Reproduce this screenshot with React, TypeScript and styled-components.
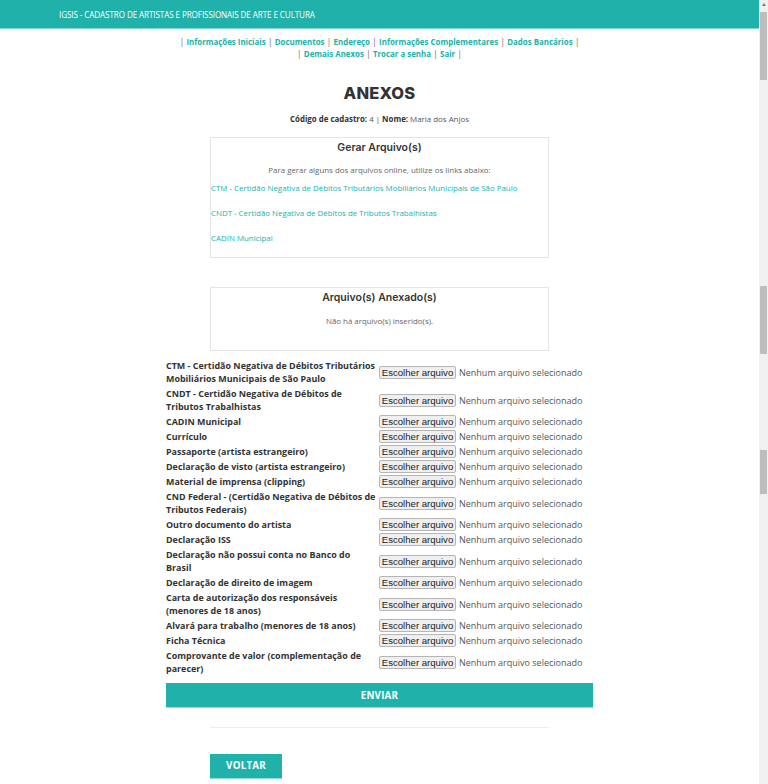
import React from "react";
import styled, { createGlobalStyle } from "styled-components";

const Global = createGlobalStyle`
  html, body { margin: 0; padding: 0; background: #fff; overflow: hidden; }
  body { font-family: "Open Sans", "DejaVu Sans", sans-serif; color: #333; }
  * { box-sizing: border-box; }
`;

const TEAL = "#20b2aa";

const Shell = styled.div`
  display: flex;
  width: 768px;
  height: 784px;
  overflow: hidden;
`;

const Main = styled.div`
  flex: 1;
  min-width: 0;
  display: flex;
  flex-direction: column;
  align-items: stretch;
`;

const Header = styled.header`
  flex: none;
  height: 29px;
  background: ${TEAL};
  border-bottom: 1px solid #7fd6d1;
  display: flex;
  align-items: center;
  padding: 1px 0 0 59px;
  color: #fff;
  font-size: 8.1px;
  letter-spacing: -0.1px;
`;

const Column = styled.div`
  flex: none;
  width: 427px;
  margin: 0 auto;
  display: flex;
  flex-direction: column;
  align-items: center;
`;

const Nav = styled.nav`
  margin-top: 7px;
  width: 427px;
  text-align: center;
  font-size: 7.9px;
  line-height: 12px;
  color: #777;
`;

const Sep = styled.span`
  font-size: 9px;
  color: #777;
`;

const NavLink = styled.a`
  color: ${TEAL};
  font-weight: 700;
  text-decoration: none;
`;

const Title = styled.h1`
  margin: 23px 0 0;
  font-family: Inter, "Liberation Sans", sans-serif;
  font-weight: 800;
  font-size: 16.5px;
  line-height: 20px;
  color: #333;
  letter-spacing: 0.2px;
`;

const Info = styled.p`
  margin: 10px 0 0;
  font-size: 7.9px;
  line-height: 12px;
  color: #555;
  b { color: #333; font-weight: 700; }
`;

const Box = styled.section<{ $mt: number; $h: number }>`
  flex: none;
  margin-top: ${(p) => p.$mt}px;
  width: 339px;
  height: ${(p) => p.$h}px;
  border: 1px solid #e4e4e4;
  display: flex;
  flex-direction: column;
  align-items: stretch;
`;

const BoxTitle = styled.h2`
  margin: 3px 0 0;
  text-align: center;
  font-family: Inter, "Liberation Sans", sans-serif;
  font-weight: 600;
  font-size: 10.5px;
  line-height: 14px;
  color: #333;
`;

const BoxText = styled.p<{ $mt: number }>`
  margin: ${(p) => p.$mt}px 0 0;
  text-align: center;
  font-size: 7.9px;
  line-height: 12px;
  color: #666;
`;

const BoxLink = styled.a<{ $mt: number }>`
  display: block;
  margin-top: ${(p) => p.$mt}px;
  font-size: 7.9px;
  line-height: 12px;
  color: ${TEAL};
  text-decoration: none;
`;

const Form = styled.form`
  margin-top: 8px;
  width: 427px;
  display: flex;
  flex-direction: column;
  gap: 2px;
`;

const Row = styled.div`
  display: flex;
  align-items: center;
`;

const Label = styled.label`
  width: 210.5px;
  margin-right: 2.5px;
  flex: none;
  font-size: 8.95px;
  font-weight: 700;
  line-height: 13px;
  color: #333;
`;

const FileButton = styled.span`
  display: inline-flex;
  align-items: center;
  justify-content: center;
  height: 13px;
  width: 77px;
  border: 1px solid #b5b5b5;
  border-radius: 2px;
  background: #efefef;
  font-family: "Liberation Sans", Arial, sans-serif;
  font-size: 9.6px;
  color: #222;
  flex: none;
`;

const FileStatus = styled.span`
  margin-left: 3px;
  font-size: 9px;
  color: #555;
  white-space: nowrap;
`;

const SendButton = styled.button`
  flex: none;
  margin-top: 8px;
  width: 427px;
  height: 25px;
  border: none;
  border-bottom: 1px solid #8fdcd7;
  background: ${TEAL};
  color: #fff;
  font-family: "Open Sans", sans-serif;
  font-weight: 700;
  font-size: 9.8px;
  letter-spacing: 0.2px;
`;

const Divider = styled.hr`
  flex: none;
  margin: 19px 0 0;
  width: 339px;
  border: none;
  border-top: 1px solid #eee;
`;

const BackRow = styled.div`
  flex: none;
  width: 339px;
  margin-top: 24px;
`;

const BackButton = styled.button`
  width: 72px;
  height: 25px;
  border: none;
  border-bottom: 1px solid #8fdcd7;
  background: ${TEAL};
  color: #fff;
  font-family: "Open Sans", sans-serif;
  font-weight: 700;
  font-size: 9.8px;
  letter-spacing: 0.2px;
`;

const ScrollTrack = styled.div`
  width: 9px;
  flex: none;
  height: 784px;
  background: #f0f0f0;
  display: flex;
  flex-direction: column;
  align-items: center;
`;

const ScrollArrow = styled.div`
  margin-top: 3px;
  width: 0;
  height: 0;
  border-left: 2.5px solid transparent;
  border-right: 2.5px solid transparent;
  border-bottom: 3px solid #7a7a7a;
`;

const Thumb = styled.div<{ $mt: number; $h: number }>`
  flex: none;
  margin-top: ${(p) => p.$mt}px;
  width: 7px;
  height: ${(p) => p.$h}px;
  background: #bdbdbd;
`;

const navItems = [
  "Informações Iniciais",
  "Documentos",
  "Endereço",
  "Informações Complementares",
  "Dados Bancários",
];
const navItems2 = ["Demais Anexos", "Trocar a senha", "Sair"];

const files = [
  "CTM - Certidão Negativa de Débitos Tributários Mobiliários Municipais de São Paulo",
  "CNDT - Certidão Negativa de Débitos de Tributos Trabalhistas",
  "CADIN Municipal",
  "Currículo",
  "Passaporte (artista estrangeiro)",
  "Declaração de visto (artista estrangeiro)",
  "Material de imprensa (clipping)",
  "CND Federal - (Certidão Negativa de Débitos de Tributos Federais)",
  "Outro documento do artista",
  "Declaração ISS",
  "Declaração não possui conta no Banco do Brasil",
  "Declaração de direito de imagem",
  "Carta de autorização dos responsáveis (menores de 18 anos)",
  "Alvará para trabalho (menores de 18 anos)",
  "Ficha Técnica",
  "Comprovante de valor (complementação de parecer)",
];

function NavLine({ items }: { items: string[] }) {
  return (
    <div>
      <Sep>|</Sep>{" "}
      {items.map((it) => (
        <React.Fragment key={it}>
          <NavLink href="#">{it}</NavLink> <Sep>|</Sep>{" "}
        </React.Fragment>
      ))}
    </div>
  );
}

export default function App() {
  return (
    <>
      <Global />
      <Shell>
        <Main>
          <Header>IGSIS - CADASTRO DE ARTISTAS E PROFISSIONAIS DE ARTE E CULTURA</Header>
          <Column>
            <Nav>
              <NavLine items={navItems} />
              <NavLine items={navItems2} />
            </Nav>
            <Title>ANEXOS</Title>
            <Info>
              <b>Código de cadastro:</b> 4 | <b>Nome:</b> Maria dos Anjos
            </Info>
            <Box $mt={12} $h={121}>
              <BoxTitle>Gerar Arquivo(s)</BoxTitle>
              <BoxText $mt={9}>Para gerar alguns dos arquivos online, utilize os links abaixo:</BoxText>
              <BoxLink $mt={6} href="#">
                CTM - Certidão Negativa de Débitos Tributários Mobiliários Municipais de São Paulo
              </BoxLink>
              <BoxLink $mt={13} href="#">
                CNDT - Certidão Negativa de Débitos de Tributos Trabalhistas
              </BoxLink>
              <BoxLink $mt={13} href="#">
                CADIN Municipal
              </BoxLink>
            </Box>
            <Box $mt={29} $h={64}>
              <BoxTitle>Arquivo(s) Anexado(s)</BoxTitle>
              <BoxText $mt={10}>Não há arquivo(s) inserido(s).</BoxText>
            </Box>
            <Form>
              {files.map((f) => (
                <Row key={f}>
                  <Label>{f}</Label>
                  <FileButton>Escolher arquivo</FileButton>
                  <FileStatus>Nenhum arquivo selecionado</FileStatus>
                </Row>
              ))}
            </Form>
            <SendButton type="button">ENVIAR</SendButton>
            <Divider />
            <BackRow>
              <BackButton type="button">VOLTAR</BackButton>
            </BackRow>
          </Column>
        </Main>
        <ScrollTrack>
          <ScrollArrow />
          <Thumb $mt={6} $h={68} />
          <Thumb $mt={206} $h={68} />
          <Thumb $mt={96} $h={44} />
        </ScrollTrack>
      </Shell>
    </>
  );
}
